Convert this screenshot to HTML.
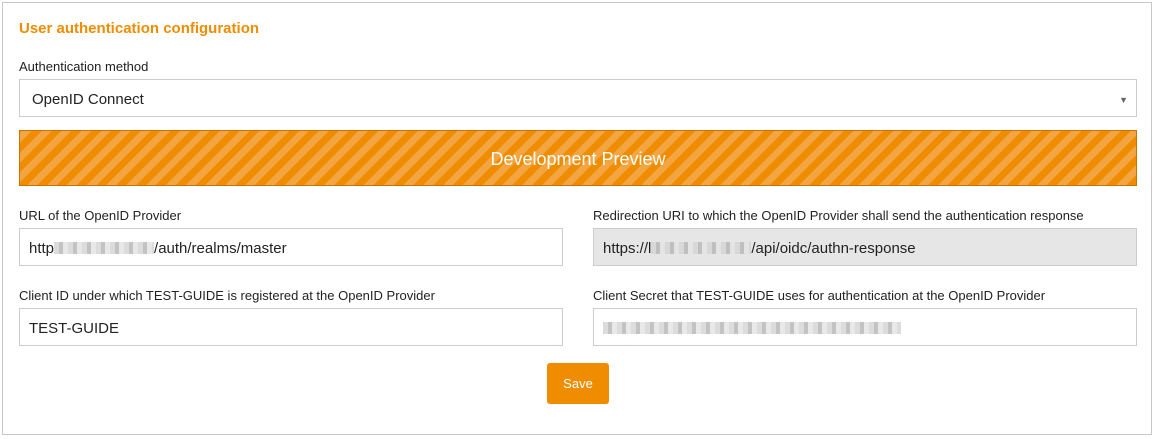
<!DOCTYPE html>
<html><head><style>
body{margin:0;width:1156px;height:439px;background:#fff;font-family:"Liberation Sans",Arial,sans-serif;position:relative;overflow:hidden}
.frame{position:absolute;left:2px;top:2px;width:1150px;height:433px;border:1px solid #c8c8c8;box-sizing:border-box}
.abs{position:absolute}
h1{position:absolute;left:19px;top:20px;margin:0;font-size:15px;font-weight:bold;color:#ef8c00}
.lbl{position:absolute;font-size:13px;color:#222}
.inp{position:absolute;height:38px;border:1px solid #ccc;box-sizing:border-box;font-size:15px;color:#222;padding-left:9px;line-height:40px;background:#fff}
.blur{display:inline-block;height:12px;vertical-align:-1px;background:repeating-linear-gradient(90deg,#d6d6d6 0 5px,#b8b8b8 5px 9px,#e4e4e4 9px 14px);opacity:.85}
.bar{position:absolute;left:19px;top:130px;width:1118px;height:56px;box-sizing:border-box;border:1px solid #c97400;
background:repeating-linear-gradient(-45deg,#ef8c00 0 7px,#f2a540 7px 14px);color:#fff;font-size:18px;text-align:center;line-height:56px}
.btn{position:absolute;left:547px;top:363px;width:62px;height:41px;background:#ef8c00;border-radius:3px;color:#fff;font-size:13px;text-align:center;line-height:41px}
</style></head><body>
<div class="frame"></div>
<h1>User authentication configuration</h1>
<div class="lbl" style="left:19px;top:59px">Authentication method</div>
<div class="inp" style="left:19px;top:79px;width:1118px;padding-left:12px">OpenID Connect<span class="abs" style="right:8px;top:0;font-size:9px;color:#666">▼</span></div>
<div class="bar">Development Preview</div>
<div class="lbl" style="left:19px;top:208px">URL of the OpenID Provider</div>
<div class="inp" style="left:19px;top:228px;width:544px">http<span class="blur" style="width:100px"></span>/auth/realms/master</div>
<div class="lbl" style="left:593px;top:208px">Redirection URI to which the OpenID Provider shall send the authentication response</div>
<div class="inp" style="left:593px;top:228px;width:544px;background:#e6e6e6">https://l<span class="blur" style="width:100px"></span>/api/oidc/authn-response</div>
<div class="lbl" style="left:19px;top:288px">Client ID under which TEST-GUIDE is registered at the OpenID Provider</div>
<div class="inp" style="left:19px;top:308px;width:544px">TEST-GUIDE</div>
<div class="lbl" style="left:593px;top:288px">Client Secret that TEST-GUIDE uses for authentication at the OpenID Provider</div>
<div class="inp" style="left:593px;top:308px;width:544px"><span class="blur" style="width:298px"></span></div>
<div class="btn">Save</div>
</body></html>
